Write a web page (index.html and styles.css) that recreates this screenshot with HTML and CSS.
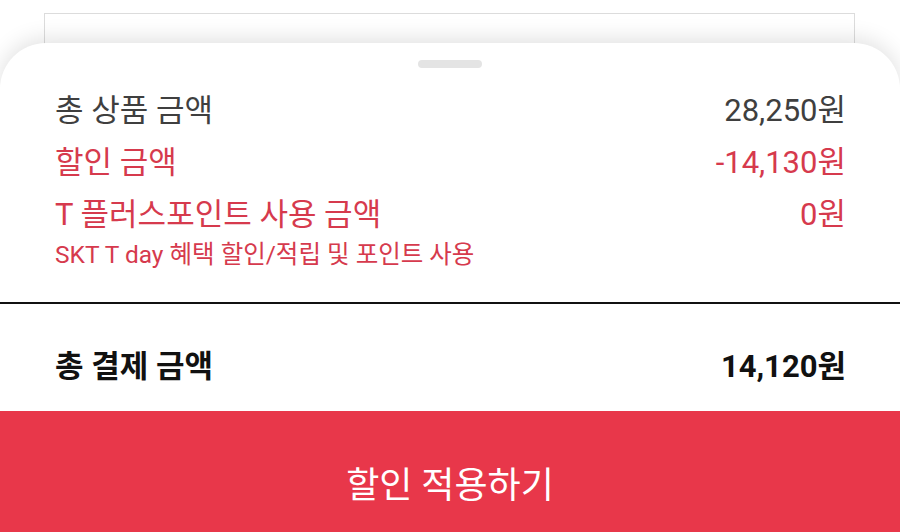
FILE: index.html
```html
<!DOCTYPE html>
<html lang="ko">
<head>
<meta charset="utf-8">
<link rel="stylesheet" href="styles.css">
</head>
<body>
<div class="page">
  <div class="behind-card"></div>
  <div class="sheet">
    <div class="handle"></div>
    <div class="rows">
      <div class="row row-gray"><span>총 상품 금액</span><span>28,250원</span></div>
      <div class="row row-red"><span>할인 금액</span><span>-14,130원</span></div>
      <div class="row row-red"><span>T 플러스포인트 사용 금액</span><span>0원</span></div>
      <div class="note">SKT T day 혜택 할인/적립 및 포인트 사용</div>
    </div>
    <div class="divider"></div>
    <div class="total"><span>총 결제 금액</span><span>14,120원</span></div>
    <div class="apply">할인 적용하기</div>
  </div>
</div>
</body>
</html>
```

FILE: styles.css
```css
html, body {
  margin: 0;
  padding: 0;
  background: #fff;
}
body {
  width: 900px;
  height: 532px;
  overflow: hidden;
  font-family: Roboto, "Noto Sans CJK KR", sans-serif;
}
.page {
  position: relative;
  width: 900px;
  height: 532px;
  padding-top: 13px;
  box-sizing: border-box;
}
.behind-card {
  margin: 0 45px 0 44px;
  height: 80px;
  border: 1px solid #dcdcdc;
  border-bottom: none;
  background: #fff;
}
.sheet {
  position: absolute;
  left: 0;
  right: 0;
  top: 43px;
  bottom: 0;
  background: #fff;
  border-radius: 46px 46px 0 0;
  box-shadow: 0 -4px 22px rgba(0, 0, 0, 0.12);
  display: flex;
  flex-direction: column;
}
.handle {
  align-self: center;
  margin-top: 17px;
  width: 64px;
  height: 8px;
  border-radius: 4px;
  background: #e4e4e4;
}
.rows {
  padding: 17px 54px 0 55px;
}
.row {
  display: flex;
  justify-content: space-between;
  font-size: 31px;
  line-height: 52px;
}
.row-gray { color: #3f3f3f; }
.row-red { color: #d63a4d; }
.note {
  color: #d63a4d;
  font-size: 24.5px;
  line-height: 27px;
}
.divider {
  margin-top: 34px;
  height: 2px;
  background: #111;
}
.total {
  display: flex;
  justify-content: space-between;
  padding: 43px 54px 24px 55px;
  font-size: 31px;
  line-height: 40px;
  font-weight: 700;
  color: #111;
}
.apply {
  flex: 1;
  background: #e8374a;
  color: #fff;
  text-align: center;
  font-size: 36px;
  line-height: 40px;
  padding-top: 55px;
}
```
